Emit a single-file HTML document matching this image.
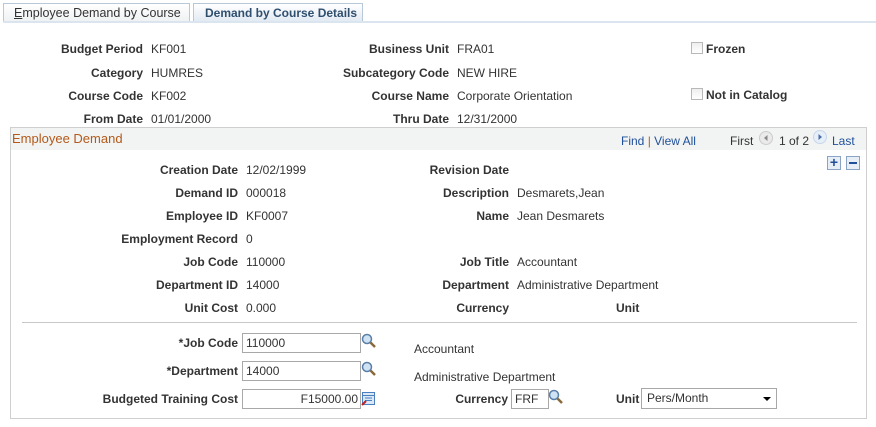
<!DOCTYPE html>
<html><head><meta charset="utf-8"><style>
*{margin:0;padding:0;box-sizing:border-box}
body{width:876px;height:427px;background:#fff;font-family:"Liberation Sans",Arial,sans-serif;font-size:12px;color:#333;position:relative;overflow:hidden}
.a{position:absolute;white-space:nowrap;line-height:14px}
.l{font-weight:bold;text-align:right}
.tab{position:absolute;top:3px;height:20px;border:1px solid #b8c8d8;border-bottom:none;font-size:12.5px;line-height:19px;padding-left:10px;white-space:nowrap;overflow:hidden}
.inp{position:absolute;height:20px;border:1px solid #a8a8a8;background:#fff;line-height:18px;padding:0 3px;font-size:12px}
.cb{position:absolute;width:12px;height:12px;border:1px solid #b8b8b8;background:linear-gradient(#eee,#fff)}
.mag{position:absolute;width:16px;height:16px}
</style></head><body>
<div class="tab" style="left:3px;width:187px;background:linear-gradient(#fff,#eef0f2);color:#333"><u>E</u>mployee Demand by Course</div>
<div class="tab" style="left:193px;width:170px;background:linear-gradient(#fff,#dfe8f2);font-weight:bold;color:#2f4f6f;font-size:12px;padding-left:11px">Demand by Course Details</div>
<div class="a" style="left:3px;top:21px;width:873px;height:2px;background:#dbe5f0"></div>

<div class="a l" style="right:733px;top:42px">Budget Period</div><div class="a" style="left:151px;top:42px">KF001</div>
<div class="a l" style="right:733px;top:66px">Category</div><div class="a" style="left:151px;top:66px">HUMRES</div>
<div class="a l" style="right:733px;top:89px">Course Code</div><div class="a" style="left:151px;top:89px">KF002</div>
<div class="a l" style="right:733px;top:112px">From Date</div><div class="a" style="left:151px;top:112px">01/01/2000</div>

<div class="a l" style="right:427px;top:42px">Business Unit</div><div class="a" style="left:457px;top:42px">FRA01</div>
<div class="a l" style="right:427px;top:66px">Subcategory Code</div><div class="a" style="left:457px;top:66px">NEW HIRE</div>
<div class="a l" style="right:427px;top:89px">Course Name</div><div class="a" style="left:457px;top:89px">Corporate Orientation</div>
<div class="a l" style="right:427px;top:112px">Thru Date</div><div class="a" style="left:457px;top:112px">12/31/2000</div>

<div class="cb" style="left:691px;top:42px"></div><div class="a" style="left:706px;top:42px;font-weight:bold">Frozen</div>
<div class="cb" style="left:691px;top:88px"></div><div class="a" style="left:706px;top:88px;font-weight:bold">Not in Catalog</div>

<div class="a" style="left:10px;top:127px;width:857px;height:292px;border:1px solid #cfcfcf"></div>
<div class="a" style="left:11px;top:128px;width:855px;height:22px;background:#f2f4f3"></div>
<div class="a" style="left:12px;top:131px;font-size:13px;color:#b3591a;line-height:15px">Employee Demand</div>
<div class="a" style="left:621px;top:134px;color:#1f4f9a">Find <span style="color:#b3591a">|</span> View All</div>
<div class="a" style="left:730px;top:134px">First</div>
<svg class="a" style="left:759px;top:131px" width="14" height="14"><circle cx="7" cy="7" r="6.5" fill="#eaeaea" stroke="#ccc"/><path d="M8.5 4L5 7l3.5 3z" fill="#888"/></svg>
<div class="a" style="left:779px;top:134px">1 of 2</div>
<svg class="a" style="left:813px;top:130px" width="14" height="14"><circle cx="7" cy="7" r="6.5" fill="#e6eef8" stroke="#c8d6ea"/><path d="M5.5 4L9 7l-3.5 3z" fill="#4a6fa5"/></svg>
<div class="a" style="left:832px;top:134px;color:#1f4f9a">Last</div>
<div class="a" style="left:827px;top:156px;width:14px;height:14px;border:1px solid #8aa4c4;background:#e8eef6;color:#1f4f9a;font-weight:bold;font-size:14px;line-height:11px;text-align:center">+</div>
<div class="a" style="left:846px;top:156px;width:14px;height:14px;border:1px solid #8aa4c4;background:#e8eef6"><div style="position:absolute;left:2px;top:5px;width:8px;height:2px;background:#1f4f9a"></div></div>

<div class="a l" style="right:638px;top:163px">Creation Date</div><div class="a" style="left:246px;top:163px">12/02/1999</div>
<div class="a l" style="right:638px;top:186px">Demand ID</div><div class="a" style="left:246px;top:186px">000018</div>
<div class="a l" style="right:638px;top:209px">Employee ID</div><div class="a" style="left:246px;top:209px">KF0007</div>
<div class="a l" style="right:638px;top:232px">Employment Record</div><div class="a" style="left:246px;top:232px">0</div>
<div class="a l" style="right:638px;top:255px">Job Code</div><div class="a" style="left:246px;top:255px">110000</div>
<div class="a l" style="right:638px;top:278px">Department ID</div><div class="a" style="left:246px;top:278px">14000</div>
<div class="a l" style="right:638px;top:301px">Unit Cost</div><div class="a" style="left:246px;top:301px">0.000</div>

<div class="a l" style="right:367px;top:163px">Revision Date</div>
<div class="a l" style="right:367px;top:186px">Description</div><div class="a" style="left:517px;top:186px">Desmarets,Jean</div>
<div class="a l" style="right:367px;top:209px">Name</div><div class="a" style="left:517px;top:209px">Jean Desmarets</div>
<div class="a l" style="right:367px;top:255px">Job Title</div><div class="a" style="left:517px;top:255px">Accountant</div>
<div class="a l" style="right:367px;top:278px">Department</div><div class="a" style="left:517px;top:278px">Administrative Department</div>
<div class="a l" style="right:367px;top:301px">Currency</div>
<div class="a l" style="left:616px;top:301px">Unit</div>

<div class="a" style="left:22px;top:322px;width:835px;height:1px;background:#c8c8c8"></div>

<div class="a l" style="right:638px;top:336px">*Job Code</div>
<div class="inp" style="left:242px;top:333px;width:119px">110000</div>
<svg class="mag" style="left:361px;top:333px" viewBox="0 0 16 16"><circle cx="6" cy="6" r="4.5" fill="#cfe3f5" stroke="#5a7fa8" stroke-width="1.5"/><path d="M9.5 9.5l4.5 4.5" stroke="#8a6a3a" stroke-width="2.5"/></svg>
<div class="a" style="left:414px;top:342px">Accountant</div>
<div class="a l" style="right:638px;top:364px">*Department</div>
<div class="inp" style="left:242px;top:361px;width:119px">14000</div>
<svg class="mag" style="left:361px;top:361px" viewBox="0 0 16 16"><circle cx="6" cy="6" r="4.5" fill="#cfe3f5" stroke="#5a7fa8" stroke-width="1.5"/><path d="M9.5 9.5l4.5 4.5" stroke="#8a6a3a" stroke-width="2.5"/></svg>
<div class="a" style="left:414px;top:370px">Administrative Department</div>
<div class="a l" style="right:638px;top:392px">Budgeted Training Cost</div>
<div class="inp" style="left:242px;top:389px;width:119px;text-align:right;padding-right:2px">F15000.00</div>
<svg class="a" style="left:361px;top:391px" width="15" height="15"><rect x="1.5" y="1.5" width="12" height="12" fill="#dbe8f6" stroke="#4a7fc0"/><path d="M2 4.5h11M4 7h7M4 9.5h7" stroke="#4a7fc0"/><path d="M1 14l4-4" stroke="#c02020" stroke-width="2"/></svg>
<div class="a l" style="right:368px;top:392px">Currency</div>
<div class="inp" style="left:511px;top:389px;width:38px">FRF</div>
<svg class="mag" style="left:548px;top:389px" viewBox="0 0 16 16"><circle cx="6" cy="6" r="4.5" fill="#cfe3f5" stroke="#5a7fa8" stroke-width="1.5"/><path d="M9.5 9.5l4.5 4.5" stroke="#8a6a3a" stroke-width="2.5"/></svg>
<div class="a l" style="left:616px;top:392px">Unit</div>
<div class="inp" style="left:641px;top:388px;width:136px;height:21px;line-height:19px;padding-left:5px">Pers/Month<span style="position:absolute;right:5px;top:8px;width:0;height:0;border-left:4px solid transparent;border-right:4px solid transparent;border-top:4px solid #000"></span></div>
</body></html>
